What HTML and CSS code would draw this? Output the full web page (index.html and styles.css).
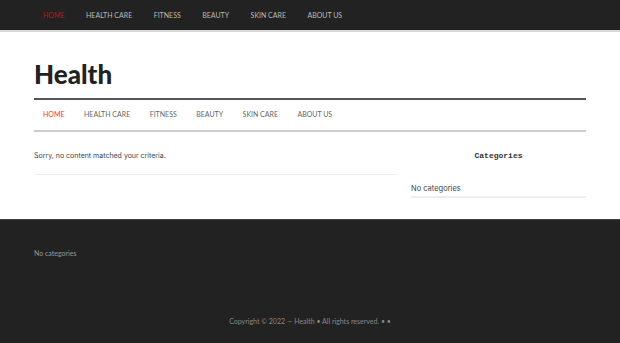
FILE: index.html
```html
<!DOCTYPE html>
<html lang="en">

<head>
    <meta charset="UTF-8">
    <meta name="viewport" content="width=device-width, initial-scale=1.0">
    <title>Health</title>
    <link rel="stylesheet" href="styles.css">
</head>

<body>

    <div class="top-bar">
        <ul class="top-menu">
            <li class="active">Home</li>
            <li>Health Care</li>
            <li>Fitness</li>
            <li>Beauty</li>
            <li>Skin Care</li>
            <li>About Us</li>
        </ul>
    </div>

    <div class="header">
        <div class="wrap">
            <h1 class="site-title">Health</h1>
            <ul class="main-menu">
                <li class="active">Home</li>
                <li>Health Care</li>
                <li>Fitness</li>
                <li>Beauty</li>
                <li>Skin Care</li>
                <li>About Us</li>
            </ul>
        </div>
    </div>

    <div class="wrap content-area">
        <div class="main">
            <p class="no-results">Sorry, no content matched your criteria.</p>
        </div>
        <div class="sidebar">
            <h4 class="widget-title">Categories</h4>
            <p class="widget-item">No categories</p>
        </div>
    </div>

    <div class="footer">
        <div class="wrap">
            <p class="footer-widget">No categories</p>
        </div>
        <p class="copyright">Copyright &copy; 2022 &mdash; Health &bull; All rights reserved. &bull; &bull;</p>
    </div>

</body>

</html>
```

FILE: styles.css
```css
body {
    font-family: Inter, Arial, sans-serif;
    margin: 0;
    padding: 0;
    background: #fff;
    color: #333;
}

ul {
    list-style: none;
    margin: 0;
    padding: 0;
}

.wrap {
    width: 552px;
    margin: 0 auto;
}

.top-bar {
    background: #222;
    height: 30px;
    border-bottom: 2px solid #d8d8d8;
}

.top-menu {
    display: flex;
    padding-left: 43px;
    gap: 21.5px;
    height: 30px;
    align-items: center;
}

.top-menu li {
    font-family: Lato, sans-serif;
    color: #bbb;
    font-size: 7px;
    text-transform: uppercase;
}

.top-menu li.active {
    color: #c0141a;
}

.header .wrap {
    padding-top: 28px;
}

.site-title {
    font-family: Lato, sans-serif;
    font-weight: 900;
    font-size: 26px;
    color: #222;
    margin: 0;
    height: 38px;
    line-height: 28px;
}

.main-menu {
    display: flex;
    gap: 19.5px;
    padding-left: 9px;
    height: 30px;
    align-items: center;
    border-top: 2px solid #555;
    border-bottom: 2px solid #ccc;
}

.main-menu li {
    font-family: Lato, sans-serif;
    color: #666;
    font-size: 7px;
    line-height: 8px;
    margin-top: -3px;
    text-transform: uppercase;
}

.main-menu li.active {
    color: #f0353b;
}

.content-area {
    display: flex;
    justify-content: space-between;
    padding-top: 19px;
    height: 68px;
}

.main {
    width: 363px;
}

.no-results {
    font-size: 7px;
    line-height: 10px;
    color: #444;
    margin: 0;
    padding-bottom: 13px;
    border-bottom: 1px solid #eee;
}

.sidebar {
    width: 175px;
}

.widget-title {
    font-family: "Liberation Mono", "Courier New", monospace;
    font-size: 8px;
    font-weight: bold;
    text-align: center;
    color: #333;
    margin: 0;
    padding-bottom: 24px;
}

.widget-item {
    font-size: 7.5px;
    line-height: 10px;
    color: #444;
    margin: 0;
    padding-bottom: 2px;
    border-bottom: 2px solid #eee;
}

.footer {
    background: #222;
    height: 126px;
    padding-top: 29px;
    box-sizing: border-box;
    border-top: 1px solid #444;
}

.footer-widget {
    font-family: Lato, sans-serif;
    font-size: 7px;
    color: #999;
    margin: 0;
}

.copyright {
    font-family: Lato, sans-serif;
    text-align: center;
    font-size: 7px;
    color: #888;
    margin: 60px 0 0;
}
```
